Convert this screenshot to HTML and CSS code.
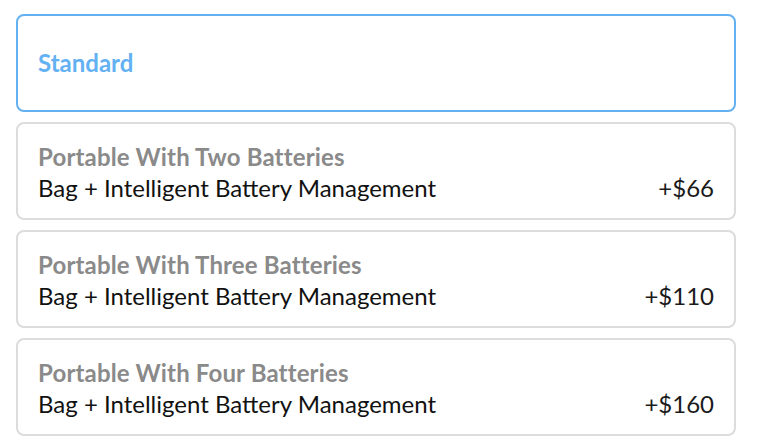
FILE: index.html
```html
<!DOCTYPE html>
<html>
<head>
<meta charset="utf-8">
<link rel="stylesheet" href="styles.css">
</head>
<body>
<div class="options">
  <div class="option selected">
    <div class="title">Standard</div>
  </div>
  <div class="option">
    <div class="title">Portable With Two Batteries</div>
    <div class="row"><span class="desc">Bag + Intelligent Battery Management</span><span class="price">+$66</span></div>
  </div>
  <div class="option">
    <div class="title">Portable With Three Batteries</div>
    <div class="row"><span class="desc">Bag + Intelligent Battery Management</span><span class="price">+$110</span></div>
  </div>
  <div class="option">
    <div class="title">Portable With Four Batteries</div>
    <div class="row"><span class="desc">Bag + Intelligent Battery Management</span><span class="price">+$160</span></div>
  </div>
</div>
</body>
</html>
```
FILE: styles.css
```css
html, body {
  margin: 0;
  background: #ffffff;
}
body {
  padding: 14px 22px 0 16px;
  font-family: Lato, "Liberation Sans", sans-serif;
}
.options {
  display: flex;
  flex-direction: column;
  gap: 10px;
}
.option {
  box-sizing: border-box;
  height: 98px;
  border: 2px solid #dcdcdc;
  border-radius: 8px;
  padding: 18px 20px 0 20px;
  display: flex;
  flex-direction: column;
}
.option.selected {
  border-color: #63b1f3;
  justify-content: center;
  padding-top: 0;
}
.title {
  font-size: 24px;
  font-weight: 700;
  line-height: 30px;
  letter-spacing: 0.15px;
  color: #8a8a8a;
}
.selected .title {
  color: #63b1f3;
  letter-spacing: 0;
}
.row {
  display: flex;
  justify-content: space-between;
  font-size: 24px;
  line-height: 32px;
  color: #111;
}
.price {
  color: #1a1a1a;
}
```
